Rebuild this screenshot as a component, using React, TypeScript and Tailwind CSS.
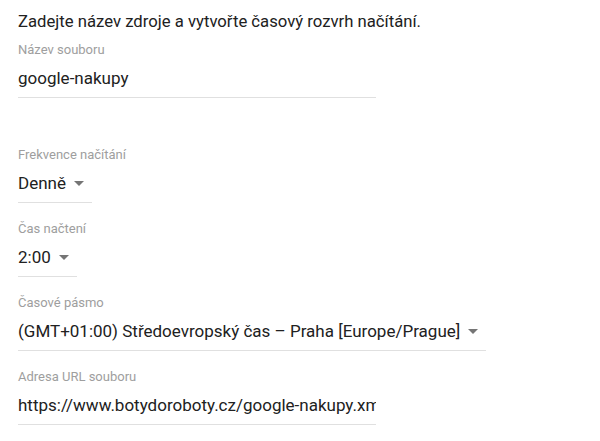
const font = { fontFamily: "Roboto, 'Noto Sans', sans-serif" };

function Caret() {
  return (
    <svg width="10" height="5" viewBox="0 0 10 5" className="ml-2 shrink-0">
      <path d="M0 0 L10 0 L5 5 Z" fill="#757575" />
    </svg>
  );
}

interface FieldProps {
  label: string;
  value: string;
  width: string;
  select?: boolean;
  className?: string;
}

function Field({ label, value, width, select, className }: FieldProps) {
  return (
    <div className={className}>
      <div className="text-[13px] leading-4 text-[#9e9e9e]">{label}</div>
      <div className={`${width} mt-2 flex items-center border-b border-[#e0e0e0] pb-[7px] ${select ? "pr-2" : ""}`}>
        {select ? (
          <span className="text-[17px] leading-6 text-[#212121] whitespace-nowrap">{value}</span>
        ) : (
          <input
            readOnly
            value={value}
            className="w-full p-0 bg-transparent outline-none text-[17px] leading-6 h-6 text-[#212121]"
            style={font}
          />
        )}
        {select && <Caret />}
      </div>
    </div>
  );
}

export default function App() {
  return (
    <div className="w-[600px] h-[441px] bg-white px-[18px] pt-3" style={font}>
      <div className="text-[16.7px] leading-5 text-[#212121]">Zadejte název zdroje a vytvořte časový rozvrh načítání.</div>
      <Field className="mt-[10px]" label="Název souboru" value="google-nakupy" width="w-[358px]" />
      <Field className="mt-[49px]" label="Frekvence načítání" value="Denně" width="w-fit" select />
      <Field className="mt-[18px]" label="Čas načtení" value="2:00" width="w-fit" select />
      <Field className="mt-[18px]" label="Časové pásmo" value="(GMT+01:00) Středoevropský čas – Praha [Europe/Prague]" width="w-fit" select />
      <Field className="mt-[18px]" label="Adresa URL souboru" value="https://www.botydoroboty.cz/google-nakupy.xml" width="w-[358px]" />
    </div>
  );
}
